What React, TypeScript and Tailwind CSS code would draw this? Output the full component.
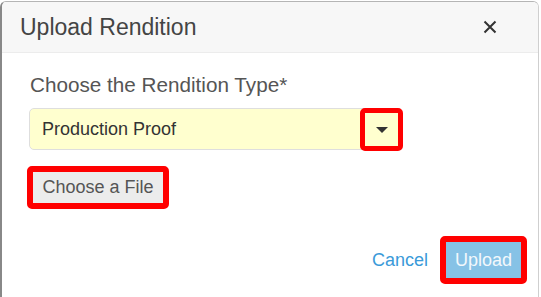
import { useState } from "react";

export default function App() {
  const [type] = useState("Production Proof");

  return (
    <div className="w-[541px] h-[297px] overflow-hidden bg-white" style={{ fontFamily: '"Liberation Sans", Arial, sans-serif' }}>
      <div className="mt-px w-[539px] h-[310px] border-l-2 border-l-[#888] border-t border-t-[#b5b5b5] border-r border-r-[#cfcfcf] rounded-[6px] bg-white overflow-hidden">
        {/* header */}
        <div className="h-[51px] bg-[#f7f7f7] border-b border-[#ececec] flex items-center justify-between pl-[18px] pr-[41px]">
          <h1 className="text-[23px] text-[#444] leading-none">Upload Rendition</h1>
          <button className="w-[14px] h-[14px] flex items-center justify-center">
            <svg width="14" height="14" viewBox="0 0 14 14">
              <path d="M1.5 1.5 L12.5 12.5 M12.5 1.5 L1.5 12.5" stroke="#333" strokeWidth="2" />
            </svg>
          </button>
        </div>

        {/* body */}
        <div className="pl-[27px] pt-[20px]">
          <label className="block text-[20.7px] leading-[24px] text-[#555] pl-px">
            Choose the Rendition Type*
          </label>

          <div className="relative mt-[11px] w-[370px] h-[42px]">
            <div className="h-full bg-[#ffffcf] border border-[#dedede] rounded-[5px] flex items-center pl-[12px]">
              <span className="text-[18px] text-[#333]">{type}</span>
            </div>
            <div className="absolute left-[331px] top-0 w-[43px] h-[43px] border-[5px] border-[#ff0000] rounded-[5px] flex items-center justify-center">
              <svg width="12" height="6" viewBox="0 0 12 6">
                <path d="M0 0 L12 0 L6 6 Z" fill="#333" />
              </svg>
            </div>
          </div>

          <div className="mt-[16px] -ml-[2px] w-[142px] h-[43px] border-[6px] border-[#ff0000] rounded-[5px] bg-[#ececec] flex items-center justify-center">
            <span className="text-[18px] text-[#555]">Choose a File</span>
          </div>
        </div>

        {/* footer */}
        <div className="mt-[27px] flex items-center justify-end gap-[12px] pr-[11px]">
          <button className="text-[18px] text-[#3a9ad9] pt-[1px]">Cancel</button>
          <div className="w-[87px] h-[48px] border-[6px] border-[#ff0000] rounded-[5px] bg-[#86c2e6] flex items-center justify-center">
            <span className="text-[18px] text-[#f2f8fc]">Upload</span>
          </div>
        </div>
      </div>
    </div>
  );
}
